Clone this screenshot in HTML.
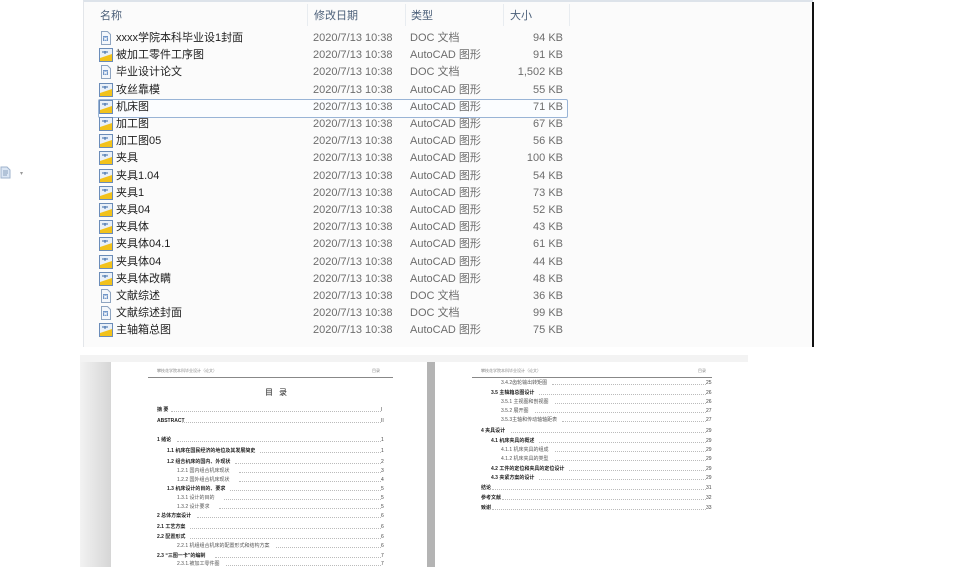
<!DOCTYPE html>
<html><head><meta charset="utf-8"><style>
*{margin:0;padding:0;box-sizing:border-box}
body{width:964px;height:567px;background:#fff;position:relative;overflow:hidden;font-family:"Liberation Sans","Noto Sans CJK SC",sans-serif}
.win{position:absolute;left:83px;top:0;width:730px;height:347px;background:#fbfbfb;border-left:1px solid #e3e6ea;border-top:2px solid #dde3ea}
.vline{position:absolute;left:812px;top:2px;width:2px;height:345px;background:#111}
.hd{position:absolute;top:7px;font-size:11px;line-height:14px;color:#4c607a}
.sep{position:absolute;top:2px;width:1px;height:22px;background:#e8ecf0}
.row{position:absolute;left:0;width:730px;height:17px;font-size:11px;line-height:13px;color:#333}
.row span{position:absolute;top:2px;white-space:nowrap;line-height:13px}
.nm{left:33px;color:#1e1e1e}
.dt{left:230px;color:#6d6d6d}
.tp{left:327px;color:#6d6d6d}
.sz{right:250px;color:#6d6d6d}
.ic{position:absolute;left:16px;top:1px;width:14px;height:14px}
.sel{position:absolute;left:14px;top:97px;width:470px;height:19px;border:1px solid #99b4d6;border-radius:2px;background:#fbfdff}
.doc{position:absolute;left:80px;top:355px;width:668px;height:212px;background:#ececec}
.topbar{position:absolute;left:80px;top:355px;width:668px;height:7px;background:#f3f3f3}
.page{position:absolute;top:362px;height:205px;background:#fff}
.t{position:absolute;font-size:5px;color:#555;white-space:nowrap;line-height:6px}
.b{font-weight:bold;color:#222}
.ld{position:absolute;height:1px;border-bottom:1px dotted #bbb}
.n{position:absolute;font-size:5px;color:#444;line-height:6px}
</style></head><body>
<div style="position:absolute;left:0;top:166px;width:11px;height:13px">
<svg width="11" height="13"><path d="M1 1h6l3 3v8H1z" fill="#dbe6f4" stroke="#9fb3cc" stroke-width="1"/><path d="M3 5h5M3 7h5M3 9h4" stroke="#8aa0bb"/></svg></div>
<div style="position:absolute;left:20px;top:170px;font-size:6px;color:#999">▾</div>

<div class="win">
<div class="hd" style="left:16px">名称</div>
<div class="sep" style="left:223px"></div>
<div class="hd" style="left:230px">修改日期</div>
<div class="sep" style="left:321px"></div>
<div class="hd" style="left:327px">类型</div>
<div class="sep" style="left:419px"></div>
<div class="hd" style="left:426px">大小</div>
<div class="sep" style="left:485px"></div>
<div class="sel"></div>
</div>
<div class="vline"></div>

<div id="rows" style="position:absolute;left:83px;top:0"></div>

<div class="doc"></div>
<div class="topbar"></div>
<div style="position:absolute;left:80px;top:362px;width:31px;height:205px;background:linear-gradient(90deg,#f2f2f2,#d6d6d6)"></div>
<div class="page" style="left:111px;width:316px"></div>
<div style="position:absolute;left:427px;top:362px;width:8px;height:205px;background:#b4b4b4"></div>
<div class="page" style="left:435px;width:313px"></div>

<div class="t" style="left:157px;top:368px;color:#888;font-size:4px">攀枝花学院本科毕业设计（论文）</div>
<div class="t" style="left:372px;top:368px;color:#888;font-size:4px">目录</div>
<div style="position:absolute;left:148px;top:377px;width:245px;height:1px;background:#888"></div>
<div class="t" style="left:481px;top:368px;color:#888;font-size:4px">攀枝花学院本科毕业设计（论文）</div>
<div class="t" style="left:698px;top:368px;color:#888;font-size:4px">目录</div>
<div style="position:absolute;left:472px;top:377px;width:240px;height:1px;background:#888"></div>
<div class="t" style="left:265px;top:388px;font-size:8px;line-height:9px;color:#222;letter-spacing:6px">目录</div>

<div id="toc"></div>

<script>
var rows=[
["doc","xxxx学院本科毕业设1封面","DOC 文档","94 KB"],
["cad","被加工零件工序图","AutoCAD 图形","91 KB"],
["doc","毕业设计论文","DOC 文档","1,502 KB"],
["cad","攻丝靠模","AutoCAD 图形","55 KB"],
["cad","机床图","AutoCAD 图形","71 KB"],
["cad","加工图","AutoCAD 图形","67 KB"],
["cad","加工图05","AutoCAD 图形","56 KB"],
["cad","夹具","AutoCAD 图形","100 KB"],
["cad","夹具1.04","AutoCAD 图形","54 KB"],
["cad","夹具1","AutoCAD 图形","73 KB"],
["cad","夹具04","AutoCAD 图形","52 KB"],
["cad","夹具体","AutoCAD 图形","43 KB"],
["cad","夹具体04.1","AutoCAD 图形","61 KB"],
["cad","夹具体04","AutoCAD 图形","44 KB"],
["cad","夹具体改瞒","AutoCAD 图形","48 KB"],
["doc","文献综述","DOC 文档","36 KB"],
["doc","文献综述封面","DOC 文档","99 KB"],
["cad","主轴箱总图","AutoCAD 图形","75 KB"]];
var docI='<svg class="ic" viewBox="0 0 14 14"><path d="M2.5 .5h6l3 3v10h-9z" fill="#f4f7fb" stroke="#8ea4c0"/><rect x="4" y="5" width="5" height="5" fill="#6f95c8"/><path d="M5 6l.8 3 .7-2 .7 2 .8-3" stroke="#fff" stroke-width=".7" fill="none"/></svg>';
var cadI='<svg class="ic" viewBox="0 0 14 14"><rect x=".5" y=".5" width="13" height="13" fill="#f0f4fa" stroke="#6b8cb8"/><path d="M1 8L13 4V13H1z" fill="#f2c21b"/><path d="M1 1h12v5L1 10z" fill="#e9f0f8"/><path d="M3 4h6M6 3v3" stroke="#3a6aa8"/></svg>';
var h='';
rows.forEach(function(r,i){var y=30+i*17.2;
h+='<div class="row" style="top:'+y+'px">'+(r[0]=="doc"?docI:cadI)+'<span class="nm">'+r[1]+'</span><span class="dt">2020/7/13 10:38</span><span class="tp">'+r[2]+'</span><span class="sz">'+r[3]+'</span></div>';});
document.getElementById('rows').innerHTML=h;
var L=[[410,0,"摘 要","I",1],[421,0,"ABSTRACT","II",1],[440,0,"1  绪论","1",1],[451,1,"1.1 机床在国民经济的地位及其发展简史","1",1],[462,1,"1.2 组合机床的国内、外现状","2",1],[471,2,"1.2.1  国内组合机床现状","3",0],[480,2,"1.2.2  国外组合机床现状","4",0],[489,1,"1.3 机床设计的目的、要求","5",1],[498,2,"1.3.1  设计的目的","5",0],[507,2,"1.3.2  设计要求","5",0],[516,0,"2  总体方案设计","6",1],[527,0,"2.1 工艺方案","6",1],[537,0,"2.2 配置形式","6",1],[546,2,"2.2.1 机组组合机床的配置形式和结构方案","6",0],[556,0,"2.3 \u201c三图一卡\u201d的编制","7",1],[564,2,"2.3.1.被加工零件图","7",0]];
var R=[[383,2,"3.4.2齿轮输出转矩图","25",0],[393,1,"3.5 主轴箱总图设计","26",1],[402,2,"3.5.1 主视图和剖视图","26",0],[411,2,"3.5.2 展开图","27",0],[420,2,"3.5.3主轴和传动轴轴距表","27",0],[431,0,"4  夹具设计","29",1],[441,1,"4.1 机床夹具的概述","29",1],[450,2,"4.1.1 机床夹具的组成","29",0],[459,2,"4.1.2 机床夹具的类型","29",0],[469,1,"4.2 工件的定位和夹具的定位设计","29",1],[478,1,"4.3 夹紧方案的设计","29",1],[488,0,"结论","31",1],[498,0,"参考文献","32",1],[508,0,"致谢","33",1]];
var t='';
function draw(a,x0,xr){a.forEach(function(e){var x=x0+e[1]*10;var w=0;for(var c of e[2]){w+=c.charCodeAt(0)>255?5:3;}
t+='<div class="t'+(e[4]?' b':'')+'" style="left:'+x+'px;top:'+(e[0]-3)+'px">'+e[2]+'</div>';
t+='<div class="ld" style="left:'+(x+w+1)+'px;top:'+(e[0]+1)+'px;width:'+(xr-x-w-4)+'px"></div>';
t+='<div class="n" style="left:'+(xr-3)+'px;top:'+(e[0]-3)+'px">'+e[3]+'</div>';});}
draw(L,157,384);draw(R,481,709);
document.getElementById('toc').innerHTML=t;
</script>
</body></html>
